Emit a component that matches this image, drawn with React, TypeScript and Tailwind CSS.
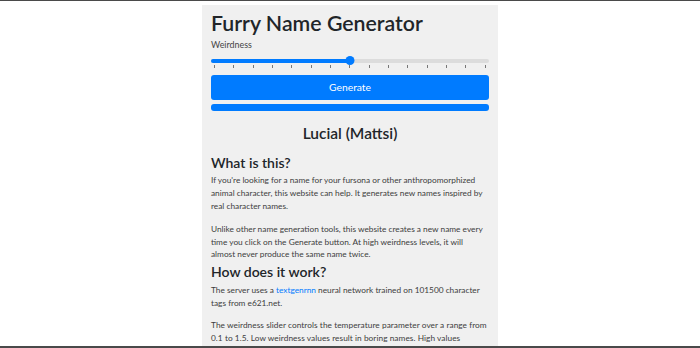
const ticks = Array.from({ length: 15 }, (_, i) => i);

function WeirdnessSlider({ value }: { value: number }) {
  return (
    <div className="mt-[5px]">
      <div className="relative flex h-[9px] items-center">
        <div className="h-[4px] w-full rounded-full bg-[#dcdcdc]" />
        <div
          className="absolute left-0 h-[4px] rounded-full bg-[#007bff]"
          style={{ width: `${value}%` }}
        />
        <div
          className="absolute h-[9px] w-[9px] -translate-x-1/2 rounded-full bg-[#007bff]"
          style={{ left: `${value}%` }}
        />
      </div>
      <div className="flex h-[3px] justify-between px-[3px]">
        {ticks.map((t) => (
          <span key={t} className="h-[3px] w-px bg-[#777]" />
        ))}
      </div>
    </div>
  );
}

export default function App() {
  return (
    <div
      className="flex h-[348px] flex-col overflow-hidden bg-white text-[#212529]"
      style={{ fontFamily: 'Lato, "Liberation Sans", sans-serif' }}
    >
      <div className="h-px bg-[#4a4a4a]" />
      <div className="flex flex-1 justify-center overflow-hidden pt-[4px]">
        <main className="w-[296px] bg-[#f0f0f0] px-[9px]">
          <h1 className="mt-[5px] text-[21.3px] font-semibold leading-[26px]">
            Furry Name Generator
          </h1>
          <label className="mt-[3px] block text-[8.9px] leading-[12px] text-[#444]">
            Weirdness
          </label>
          <WeirdnessSlider value={50} />

          <button className="mt-[7px] h-[25px] w-full rounded-[3px] bg-[#007bff] text-[10.3px] text-white">
            Generate
          </button>
          <div className="mt-[4px] h-[7px] w-full rounded-[3px] bg-[#007bff]" />

          <h2 className="mt-[11px] text-center text-[15.5px] font-semibold leading-[22px]">
            Lucial (Mattsi)
          </h2>

          <h3 className="mt-[9.5px] text-[14px] font-semibold leading-[18px]">
            What is this?
          </h3>
          <p className="mt-[2.6px] text-[8.3px] leading-[12.7px] text-[#3d3d3d]">
            If you're looking for a name for your fursona or other
            anthropomorphized animal character, this website can help. It
            generates new names inspired by real character names.
          </p>
          <p className="mt-[10.7px] text-[8.3px] leading-[12.7px] text-[#3d3d3d]">
            Unlike other name generation tools, this website creates a new name
            every time you click on the Generate button. At high weirdness
            levels, it will almost never produce the same name twice.
          </p>

          <h3 className="mt-[2px] text-[14px] font-semibold leading-[18px]">
            How does it work?
          </h3>
          <p className="mt-[3px] text-[8.3px] leading-[12.7px] text-[#3d3d3d]">
            The server uses a{" "}
            <a href="#" className="text-[#007bff]">
              textgenrnn
            </a>{" "}
            neural network trained on 101500 character tags from e621.net.
          </p>
          <p className="mt-[10px] text-[8.3px] leading-[12.7px] tracking-[0.05px] text-[#3d3d3d]">
            The weirdness slider controls the temperature parameter over a
            range from 0.1 to 1.5. Low weirdness values result in boring names.
            High values produce names that are often long and nonsensical.
          </p>
        </main>
      </div>
      <div className="h-[2px] bg-[#4a4a4a]" />
    </div>
  );
}
